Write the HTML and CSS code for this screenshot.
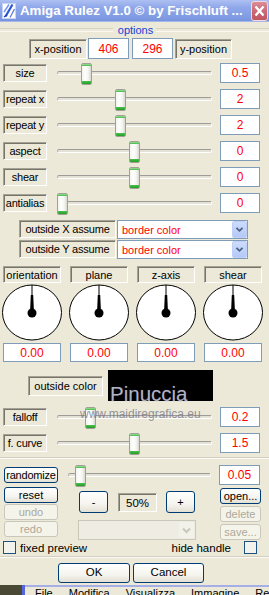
FILE: index.html
```html
<!DOCTYPE html>
<html>
<head>
<meta charset="utf-8">
<link rel="stylesheet" href="styles.css">
</head>
<body>
<div class="win">
  <div class="titlebar">
    <svg class="appicon" viewBox="0 0 14 16" width="14" height="16">
      <rect x="0.5" y="0.5" width="13" height="15" fill="#fff" stroke="#C8D4F4"/>
      <path d="M10.5 1.5 L3.5 13.5" stroke="#2B57D8" stroke-width="2.2" fill="none"/>
      <path d="M7 1.5 L2 9" stroke="#7090EA" stroke-width="1.4" fill="none"/>
      <path d="M12.5 6 L8 14.5" stroke="#4D74E0" stroke-width="1.2" fill="none"/>
      <path d="M2 14 L5 12" stroke="#1D40B8" stroke-width="1.5" fill="none"/>
    </svg>
    <span class="title">Amiga Rulez V1.0 © by Frischluft ...</span>
    <div class="close">
      <svg viewBox="0 0 17 20" width="17" height="20">
        <path d="M4.5 5.5 L12.5 14.5 M12.5 5.5 L4.5 14.5" stroke="#fff" stroke-width="2.4" fill="none"/>
      </svg>
    </div>
  </div>

  <div class="options"><span>options</span></div>

  <div class="posrow">
    <div class="lbl pos-l">x-position</div>
    <div class="val pos-v1">406</div>
    <div class="val pos-v2">296</div>
    <div class="lbl pos-r">y-position</div>
  </div>

  <div class="srows">
    <div class="srow"><div class="lbl slbl">size</div><div class="slider"><div class="track"></div><div class="thumb" style="left:29px"></div></div><div class="val sval">0.5</div></div>
    <div class="srow"><div class="lbl slbl">repeat x</div><div class="slider"><div class="track"></div><div class="thumb" style="left:63px"></div></div><div class="val sval">2</div></div>
    <div class="srow"><div class="lbl slbl">repeat y</div><div class="slider"><div class="track"></div><div class="thumb" style="left:63px"></div></div><div class="val sval">2</div></div>
    <div class="srow"><div class="lbl slbl">aspect</div><div class="slider"><div class="track"></div><div class="thumb" style="left:77px"></div></div><div class="val sval">0</div></div>
    <div class="srow"><div class="lbl slbl">shear</div><div class="slider"><div class="track"></div><div class="thumb" style="left:77px"></div></div><div class="val sval">0</div></div>
    <div class="srow"><div class="lbl slbl">antialias</div><div class="slider"><div class="track"></div><div class="thumb" style="left:5px"></div></div><div class="val sval">0</div></div>
  </div>

  <div class="selrows">
    <div class="selrow">
      <div class="lbl sellbl">outside X assume</div>
      <div class="select"><span class="seltxt">border color</span><span class="arrow"><svg viewBox="0 0 15 17" width="15" height="17"><path d="M4 6.5 L7.5 10 L11 6.5" stroke="#4D6185" stroke-width="2" fill="none"/></svg></span></div>
    </div>
    <div class="selrow">
      <div class="lbl sellbl">outside Y assume</div>
      <div class="select"><span class="seltxt">border color</span><span class="arrow"><svg viewBox="0 0 15 17" width="15" height="17"><path d="M4 6.5 L7.5 10 L11 6.5" stroke="#4D6185" stroke-width="2" fill="none"/></svg></span></div>
    </div>
  </div>

  <div class="dgrid dlabels">
    <div class="lbl dlbl">orientation</div>
    <div class="lbl dlbl">plane</div>
    <div class="lbl dlbl">z-axis</div>
    <div class="lbl dlbl">shear</div>
  </div>

  <div class="dgrid dials">
    <svg class="dial" viewBox="0 0 60 57" width="60" height="57"><ellipse cx="30" cy="28.5" rx="29.5" ry="27.5" fill="#fff" stroke="#000"/><path d="M30 1 L30 12" stroke="#000" stroke-width="1"/><polygon points="28.8,11 31.2,11 32,29 28,29" fill="#000"/><circle cx="30" cy="29" r="4.5" fill="#000"/></svg>
    <svg class="dial" viewBox="0 0 60 57" width="60" height="57"><ellipse cx="30" cy="28.5" rx="29.5" ry="27.5" fill="#fff" stroke="#000"/><path d="M30 1 L30 12" stroke="#000" stroke-width="1"/><polygon points="28.8,11 31.2,11 32,29 28,29" fill="#000"/><circle cx="30" cy="29" r="4.5" fill="#000"/></svg>
    <svg class="dial" viewBox="0 0 60 57" width="60" height="57"><ellipse cx="30" cy="28.5" rx="29.5" ry="27.5" fill="#fff" stroke="#000"/><path d="M30 1 L30 12" stroke="#000" stroke-width="1"/><polygon points="28.8,11 31.2,11 32,29 28,29" fill="#000"/><circle cx="30" cy="29" r="4.5" fill="#000"/></svg>
    <svg class="dial" viewBox="0 0 60 57" width="60" height="57"><ellipse cx="30" cy="28.5" rx="29.5" ry="27.5" fill="#fff" stroke="#000"/><path d="M30 1 L30 12" stroke="#000" stroke-width="1"/><polygon points="28.8,11 31.2,11 32,29 28,29" fill="#000"/><circle cx="30" cy="29" r="4.5" fill="#000"/></svg>
  </div>

  <div class="dgrid dvals">
    <div class="val dval">0.00</div>
    <div class="val dval">0.00</div>
    <div class="val dval">0.00</div>
    <div class="val dval">0.00</div>
  </div>

  <div class="ocrow">
    <div class="lbl oclbl">outside color</div>
    <div class="swatch"></div>
  </div>

  <div class="srows frows">
    <div class="srow"><div class="lbl slbl">falloff</div><div class="slider"><div class="track"></div><div class="thumb" style="left:33px"></div></div><div class="val sval">0.2</div></div>
    <div class="srow"><div class="lbl slbl">f. curve</div><div class="slider"><div class="track"></div><div class="thumb" style="left:77px"></div></div><div class="val sval">1.5</div></div>
  </div>

  <div class="sep"></div>

  <div class="randrow">
    <button class="btn lbtn rbtn">randomize</button>
    <div class="slider rslider"><div class="track"></div><div class="thumb" style="left:12px"></div></div>
    <div class="val rval">0.05</div>
  </div>

  <div class="cols">
    <div class="col-left">
      <button class="btn lbtn">reset</button>
      <button class="btn lbtn dis">undo</button>
      <button class="btn lbtn dis">redo</button>
    </div>
    <div class="col-mid">
      <div class="zoomrow">
        <button class="btn zbtn">-</button>
        <div class="lbl pct">50%</div>
        <button class="btn zbtn zplus">+</button>
      </div>
      <div class="dsel"><span class="dselarrow"><svg viewBox="0 0 15 17" width="15" height="17"><path d="M4 6.5 L7.5 10 L11 6.5" stroke="#C9C7BA" stroke-width="2" fill="none"/></svg></span></div>
    </div>
    <div class="col-right">
      <button class="btn rtbtn">open...</button>
      <button class="btn rtbtn dis">delete</button>
      <button class="btn rtbtn dis">save...</button>
    </div>
  </div>

  <div class="checkrow">
    <span class="cbox"></span><span class="cbtxt">fixed preview</span>
    <span class="spacer"></span>
    <span class="cbtxt">hide handle</span><span class="cbox cbox-r"></span>
  </div>

  <div class="sep sep2"></div>

  <div class="okrow">
    <button class="btn okbtn">OK</button>
    <button class="btn okbtn cancel">Cancel</button>
  </div>

  <div class="strip">
    <div class="strip-dark"></div>
    <div class="strip-blue"></div>
    <div class="strip-menu"><span>File</span><span>Modifica</span><span>Visualizza</span><span>Immagine</span><span>Reg</span></div>
  </div>

  <div class="wm1">Pinuccia</div>
  <div class="wm2">www.maidiregrafica.eu</div>
</div>
</body>
</html>
```

FILE: styles.css
```css
* { box-sizing: border-box; }
html, body { margin: 0; padding: 0; }
body {
  width: 269px;
  height: 595px;
  overflow: hidden;
  background: #ECE9D8;
  font-family: "Liberation Sans", Arial, sans-serif;
  font-size: 11px;
  color: #000;
}
.win {
  position: relative;
  width: 269px;
  height: 595px;
  background: #ECE9D8;
  overflow: hidden;
}

/* title bar */
.titlebar {
  height: 22px;
  display: flex;
  align-items: center;
  padding-left: 2px;
  background: linear-gradient(#AEC0F2, #90A8EA 35%, #819CE3 80%, #7894DF);
  border-bottom: 1px solid #A5B7E8;
}
.appicon { flex: none; display: block; }
.title {
  flex: 1;
  margin-left: 4px;
  color: #fff;
  font-weight: bold;
  font-size: 13.3px;
  white-space: nowrap;
  overflow: hidden;
}
.close {
  flex: none;
  width: 17px;
  height: 20px;
  margin-right: 1px;
  border: 1px solid #F1D9DD;
  border-radius: 3px;
  background: linear-gradient(#DB8C96, #C9636F 60%, #BF5662);
  display: flex;
  align-items: center;
  justify-content: center;
}
.close svg { display: block; margin: -1px; }

/* options header */
.options {
  height: 16px;
  display: flex;
  align-items: center;
}
.options::before, .options::after {
  content: "";
  flex: 1;
  height: 2px;
  border-top: 1px solid #D6D3C4;
  border-bottom: 1px solid #FAF9F4;
}
.options span {
  color: #1543D6;
  padding: 0 3px 0 5px;
  line-height: 14px;
}

/* generic boxes */
.lbl {
  display: flex;
  align-items: center;
  justify-content: center;
  white-space: nowrap;
  border: 1px solid;
  border-color: #A4A195 #FFFFFF #FFFFFF #A4A195;
  box-shadow: inset 1px 1px 0 #77756A;
  background: #ECE9D8;
}
.val {
  display: flex;
  align-items: center;
  justify-content: center;
  background: #fff;
  border: 1px solid #7F9DB9;
  color: #FF0000;
  font-size: 12px;
}

/* position row */
.posrow {
  height: 21px;
  display: flex;
  align-items: center;
  padding-left: 29px;
}
.pos-l { width: 58px; height: 20px; margin-top: 1px; }
.pos-v1 { width: 41px; height: 21px; margin-left: 1px; }
.pos-v2 { width: 41px; height: 21px; margin-left: 3px; }
.pos-r { width: 57px; height: 20px; margin-left: 2px; margin-top: 1px; }

/* slider rows */
.srows {
  margin-top: 4px;
  display: flex;
  flex-direction: column;
  gap: 6px;
}
.frows { margin-top: 6px; }
.srow {
  height: 20px;
  display: flex;
  align-items: center;
  padding-left: 3px;
}
.slbl { width: 44px; height: 18px; letter-spacing: -0.2px; }
.slider {
  position: relative;
  width: 165px;
  height: 20px;
  margin-left: 5px;
  display: flex;
  align-items: center;
  padding: 0 5px;
}
.track {
  flex: 1;
  height: 4px;
  border-radius: 2px;
  border-top: 1px solid #9D9C99;
  border-left: 1px solid #B5B4AE;
  border-right: 1px solid #fff;
  border-bottom: 1px solid #fff;
  background: #E4E2D6;
}
.thumb {
  position: absolute;
  top: 0;
  width: 11px;
  height: 22px;
  border: 1px solid #A19F98;
  border-radius: 2px;
  background: linear-gradient(to right, #F2F2EE, #FFFFFF 35%, #F4F4F0 70%, #D8D8D0);
  overflow: hidden;
}
.thumb::before {
  content: "";
  position: absolute;
  left: 0; right: 0; top: 0;
  height: 2px;
  background: linear-gradient(#9BE09B, #44B544);
}
.thumb::after {
  content: "";
  position: absolute;
  left: 0; right: 0; bottom: 0;
  height: 3px;
  background: linear-gradient(#52C052, #1E9E1E);
}
.sval { width: 40px; height: 20px; margin-left: 3px; }

/* selects */
.selrows {
  margin-top: 7px;
  display: flex;
  flex-direction: column;
  gap: 1px;
  padding-left: 19px;
}
.selrow {
  height: 19px;
  display: flex;
  align-items: flex-start;
}
.sellbl { width: 97px; height: 18px; letter-spacing: -0.2px; }
.select {
  width: 131px;
  height: 19px;
  margin-left: 1px;
  border: 1px solid #7F9DB9;
  background: #fff;
  display: flex;
  align-items: stretch;
}
.seltxt {
  flex: 1;
  color: #FF0000;
  padding-left: 4px;
  display: flex;
  align-items: center;
}
.arrow {
  width: 15px;
  background: linear-gradient(#CCDCFC, #B4C9F6);
  border: 1px solid #BED0F8;
  border-radius: 2px;
  display: flex;
  align-items: center;
  justify-content: center;
}
.arrow svg, .dselarrow svg { display: block; }

/* dials */
.dgrid {
  display: grid;
  grid-template-columns: repeat(4, 58px);
  column-gap: 9px;
  padding-left: 3px;
  justify-items: center;
}
.dlabels { margin-top: 7px; height: 17px; }
.dlbl { width: 58px; height: 17px; }
.dials { margin-top: 1px; height: 57px; }
.dial { display: block; }
.dvals { margin-top: 2px; height: 19px; }
.dval { width: 58px; height: 19px; }

/* outside color */
.ocrow {
  margin-top: 8px;
  height: 31px;
  display: flex;
  align-items: flex-start;
  padding-left: 28px;
}
.oclbl { width: 75px; height: 20px; margin-top: 6px; }
.swatch { width: 105px; height: 31px; margin-left: 5px; background: #000; }

/* separators */
.sep {
  margin-top: 4px;
  height: 2px;
  border-top: 1px solid #D2CFC0;
  border-bottom: 1px solid #FBFAF5;
}
.sep2 { margin-top: 2px; }

/* buttons */
.btn {
  font-family: inherit;
  font-size: 11px;
  color: #000;
  padding: 0;
  margin: 0;
  border: 1px solid #003C74;
  border-radius: 3px;
  background: linear-gradient(#FFFFFF, #F5F4EE 60%, #E3E0D4);
  display: flex;
  align-items: center;
  justify-content: center;
  line-height: 1;
}
.btn.dis {
  border-color: #C9C7BA;
  color: #ACA899;
  background: #F5F4EA;
}

/* randomize row */
.randrow {
  margin-top: 6px;
  height: 20px;
  display: flex;
  align-items: center;
  padding-left: 4px;
}
.rbtn { width: 54px; height: 17px; letter-spacing: -0.2px; }
.rslider { width: 153px; margin-left: 5px; }
.rval { width: 41px; height: 20px; margin-left: 3px; }

/* columns */
.cols {
  margin-top: 2px;
  height: 53px;
  display: flex;
  align-items: flex-start;
}
.col-left {
  width: 58px;
  padding-left: 4px;
  display: flex;
  flex-direction: column;
  gap: 1px;
}
.lbtn { width: 54px; height: 16px; }
.col-mid {
  width: 118px;
  margin-left: 20px;
  padding-top: 4px;
}
.zoomrow {
  height: 22px;
  display: flex;
  align-items: flex-start;
}
.zbtn { width: 29px; height: 22px; margin-left: 1px; font-size: 11px; }
.zplus { margin-left: 9px; }
.pct { width: 39px; height: 19px; margin-left: 10px; margin-top: 2px; font-size: 11.5px; }
.dsel {
  margin-top: 7px;
  width: 118px;
  height: 20px;
  border: 1px solid #C9C7BA;
  background: #EFEDE3;
  display: flex;
  justify-content: flex-end;
  padding: 1px;
}
.dselarrow {
  width: 15px;
  background: #F2F1EA;
  border-radius: 2px;
  display: flex;
  align-items: center;
  justify-content: center;
}
.col-right {
  width: 41px;
  margin-left: 24px;
  padding-top: 1px;
  display: flex;
  flex-direction: column;
  gap: 2px;
}
.rtbtn { width: 41px; height: 16px; }

/* checkbox row */
.checkrow {
  margin-top: 1px;
  height: 13px;
  display: flex;
  align-items: center;
  padding-left: 3px;
}
.cbox {
  width: 13px;
  height: 13px;
  border: 1px solid #1C5180;
  background: #F3F2EC;
  flex: none;
}
.cbtxt { margin-left: 4px; font-size: 11.5px; white-space: nowrap; }
.spacer { flex: 1; }
.cbox-r { margin-left: 13px; margin-right: 12px; }

/* OK / Cancel */
.okrow {
  margin-top: 5px;
  height: 20px;
  display: flex;
  padding-left: 58px;
}
.okbtn { width: 72px; height: 20px; font-size: 11.5px; }
.cancel { width: 71px; margin-left: 3px; }

/* underlying window strip */
.strip {
  margin-top: 2px;
  height: 10px;
  display: flex;
  overflow: hidden;
}
.strip-dark { width: 22px; background: #4A4936; }
.strip-blue { width: 3px; background: #5566DC; }
.strip-menu {
  flex: 1;
  border-top: 2px solid #A5AEE6;
  background: #ECE9D8;
  display: flex;
  padding-left: 10px;
  font-size: 11px;
  line-height: 12px;
  white-space: nowrap;
  overflow: hidden;
}
.strip-menu span { margin-right: 16px; text-decoration: underline; }

/* watermark overlay */
.wm1 {
  position: absolute;
  left: 110px;
  top: 384px;
  font-size: 20.5px;
  line-height: 20px;
  color: rgba(186, 186, 206, 0.95);
  text-shadow: 0 0 1px rgba(80, 80, 100, 0.7);
  white-space: nowrap;
}
.wm2 {
  position: absolute;
  left: 80px;
  top: 408px;
  font-size: 12px;
  line-height: 12px;
  color: rgba(115, 115, 135, 0.75);
  white-space: nowrap;
}
```
